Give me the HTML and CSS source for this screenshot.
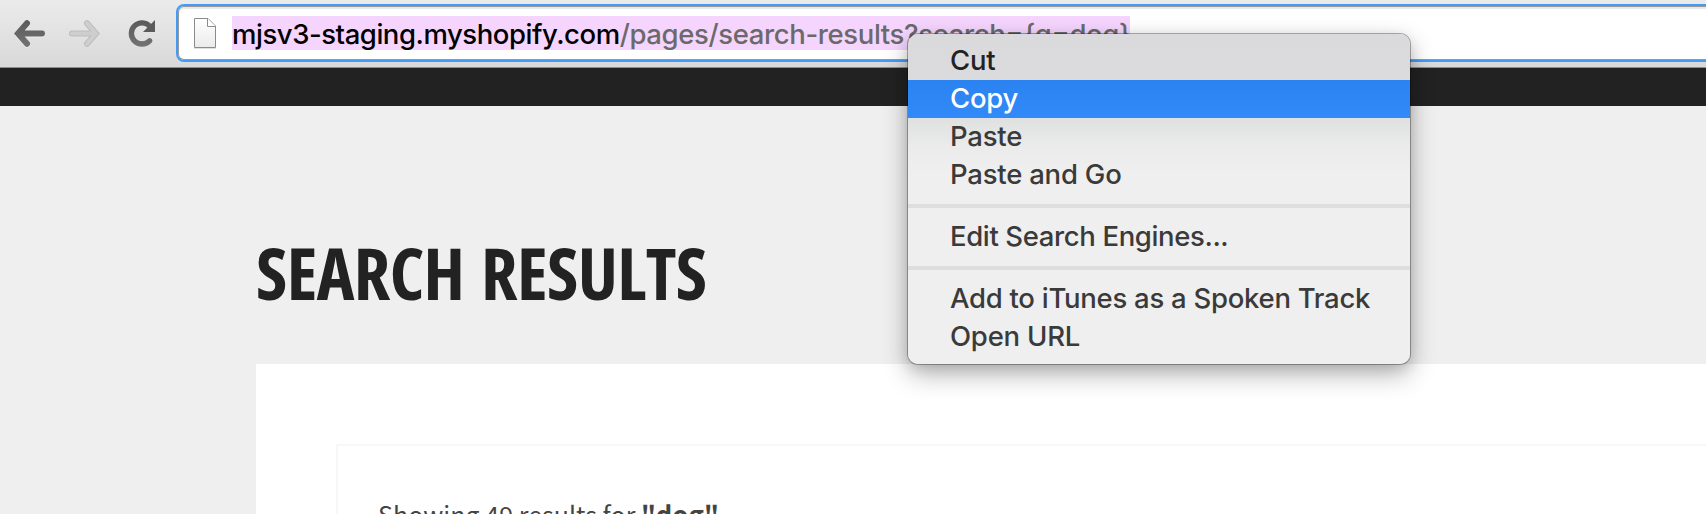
FILE: index.html
```html
<!DOCTYPE html>
<html lang="en">
<head>
<meta charset="utf-8">
<title>Search Results</title>
<link rel="stylesheet" href="styles.css">
</head>
<body>
<header class="toolbar">
  <svg class="nav" width="160" height="67" viewBox="0 0 160 67">
    <defs>
      <linearGradient id="ink" x1="0" y1="20" x2="0" y2="47" gradientUnits="userSpaceOnUse"><stop offset="0" stop-color="#595959"/><stop offset="1" stop-color="#747474"/></linearGradient>
    </defs>
    <g fill="none" stroke-width="6" stroke-linecap="round" stroke-linejoin="miter">
      <g stroke="#fff" opacity=".4" transform="translate(0 1)"><path d="M42 33.500L19 33.600M27 23.200L18 33.500L27 43.800"/></g>
      <path stroke="url(#ink)" d="M42 33.500L19 33.600M27 23.200L18 33.500L27 43.800"/>
      <path stroke="#bdbdbd" d="M72 33.500L95 33.600M87 23.200L96 33.500L87 43.800"/>
      <path stroke="#cecece" stroke-width="4" d="M72 33.500L95 33.600M87 23.200L96 33.500L87 43.800"/>
      <path stroke="url(#ink)" stroke-width="5.400" d="M150 26.500A10.600 10.600 0 1 0 149.600 40.800"/>
    </g>
    <path fill="#5b5b5b" d="M155 20V32H143Z"/>
  </svg>
  <div class="omnibox">
    <svg class="page-icon" width="24" height="34" viewBox="0 0 24 34">
      <defs><linearGradient id="paper" x2="0" y2="1"><stop stop-color="#fff"/><stop offset="1" stop-color="#ebebeb"/></linearGradient></defs>
      <path d="M1 31.500H23" stroke="#e0e0e0" stroke-width="1"/>
      <path d="M1.500 1.500H15L22.500 9V30.500H1.500Z" fill="url(#paper)" stroke="#8b8b8b"/>
      <path d="M14.500 1.500V9.500H22.500" fill="#fff" stroke="#8b8b8b"/>
    </svg>
    <div class="url"><span class="host">mjsv3-staging.myshopify.com</span><span class="path">/pages/search-results?search={q=dog}</span></div>
  </div>
</header>
<div class="band"></div>
<main class="page">
  <h1 class="title">SEARCH RESULTS</h1>
  <section class="card">
    <div class="results"><p class="summary">Showing 49 results for <b>"dog"</b></p></div>
  </section>
</main>
<nav class="menu">
  <div class="item first">Cut</div>
  <div class="item active">Copy</div>
  <div class="item">Paste</div>
  <div class="item">Paste and Go</div>
  <div class="rule"></div>
  <div class="item edit">Edit Search Engines...</div>
  <div class="rule"></div>
  <div class="item long">Add to iTunes as a Spoken Track</div>
  <div class="item">Open URL</div>
</nav>
</body>
</html>
```
FILE: styles.css
```css
* { box-sizing: border-box; }
body { margin: 0; width: 1706px; height: 514px; overflow: hidden; background: #efefef; }
.toolbar { display: flex; height: 68px; padding-top: 4px; background: linear-gradient(#ebebeb, #d9d9d9); border-bottom: 1px solid #8d8d8d; overflow: hidden; }
.nav { flex: none; width: 160px; margin: -4px 16px 0 0; }
.omnibox { flex: none; display: flex; width: 1560px; height: 58px; padding: 12px 0 0 15px; background: #fff; border: 2px solid #439bf8; border-radius: 8px; box-shadow: inset 0 0 0 1px #999, inset 0 2px 1px 1px #e8e8e8; }
.page-icon { flex: none; margin: -1px 15px 0 0; }
.url { flex: none; width: 898px; height: 34px; margin-top: -2px; background: #f5d5fe; font: 450 27.5px/36px Inter, sans-serif; white-space: nowrap; color: #6a6a6a; }
.host { color: #000; letter-spacing: -0.45px; }
.path { letter-spacing: -0.37px; }
.band { height: 38px; background: #222; }
.page { padding-left: 256px; }
.title { margin: 0; height: 258px; padding-top: 118px; font: bold 71.5px/98px "Open Sans", sans-serif; font-stretch: 75%; letter-spacing: -0.6px; word-spacing: 4.5px; color: #222; white-space: nowrap; }
.card { height: 150px; padding: 80px 0 0 80px; background: #fff; overflow: hidden; }
.results { height: 100px; padding: 47px 0 0 40px; border: 2px solid #f7f7f7; border-right: 0; }
.summary { margin: 0; font: 25px/42px "Noto Sans CJK SC", sans-serif; letter-spacing: 0.03px; color: #444; white-space: nowrap; }
.summary b { font-size: 26px; line-height: 1; }
.menu { position: absolute; left: 908px; top: 34px; width: 502px; height: 330px; padding-top: 8px; border-radius: 10px; background: linear-gradient(#dadadc 0, #dadbdc 46px, #dfe0e0 84px, #ebebeb 112px, #efefef 140px); box-shadow: 0 0 0 1px rgba(0,0,0,.3), 0 10px 26px rgba(0,0,0,.3), 0 3px 14px rgba(0,0,0,.12); }
.item { height: 38px; padding-left: 42px; font: 450 27.5px/36px Inter, sans-serif; letter-spacing: -0.22px; color: #3a3a3a; white-space: nowrap; }
.long { letter-spacing: -0.27px; }
.edit { letter-spacing: -0.37px; }
.first { color: #222; }
.active { background: linear-gradient(#2a83f1, #318af7); color: #fff; }
.rule { height: 4px; margin: 10px 0; background: #dedede; }
```
